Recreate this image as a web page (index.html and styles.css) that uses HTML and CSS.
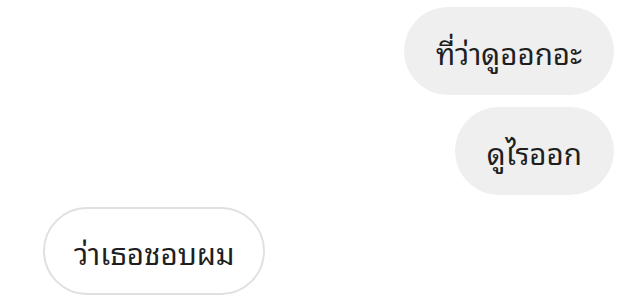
FILE: index.html
```html
<!DOCTYPE html>
<html lang="th">
<head>
  <meta charset="UTF-8" />
  <title>Chat</title>
  <link rel="stylesheet" href="styles.css">
</head>
<body>
  <div class="chat">
    <div class="msg sent">ที่ว่าดูออกอะ</div>
    <div class="msg sent">ดูไรออก</div>
    <div class="msg received">ว่าเธอชอบผม</div>
  </div>
</body>
</html>
```

FILE: styles.css
```css
body {
  margin: 0;
  background: #ffffff;
  font-family: "Noto Sans Thai Looped", "Loma", "Garuda", "Noto Sans Thai", sans-serif;
}

.chat {
  display: flex;
  flex-direction: column;
  gap: 12px;
  padding: 7px 28px 0 43px;
}

.msg {
  box-sizing: border-box;
  height: 88px;
  padding: 0 32px;
  border-radius: 44px;
  display: flex;
  align-items: center;
  font-size: 29.5px;
  color: #1f1f1f;
}

.sent {
  align-self: flex-end;
  background: #efefef;
}

.received {
  align-self: flex-start;
  background: #fff;
  border: 2px solid #e0e0e0;
  padding: 0 28px 0 29px;
}
```
